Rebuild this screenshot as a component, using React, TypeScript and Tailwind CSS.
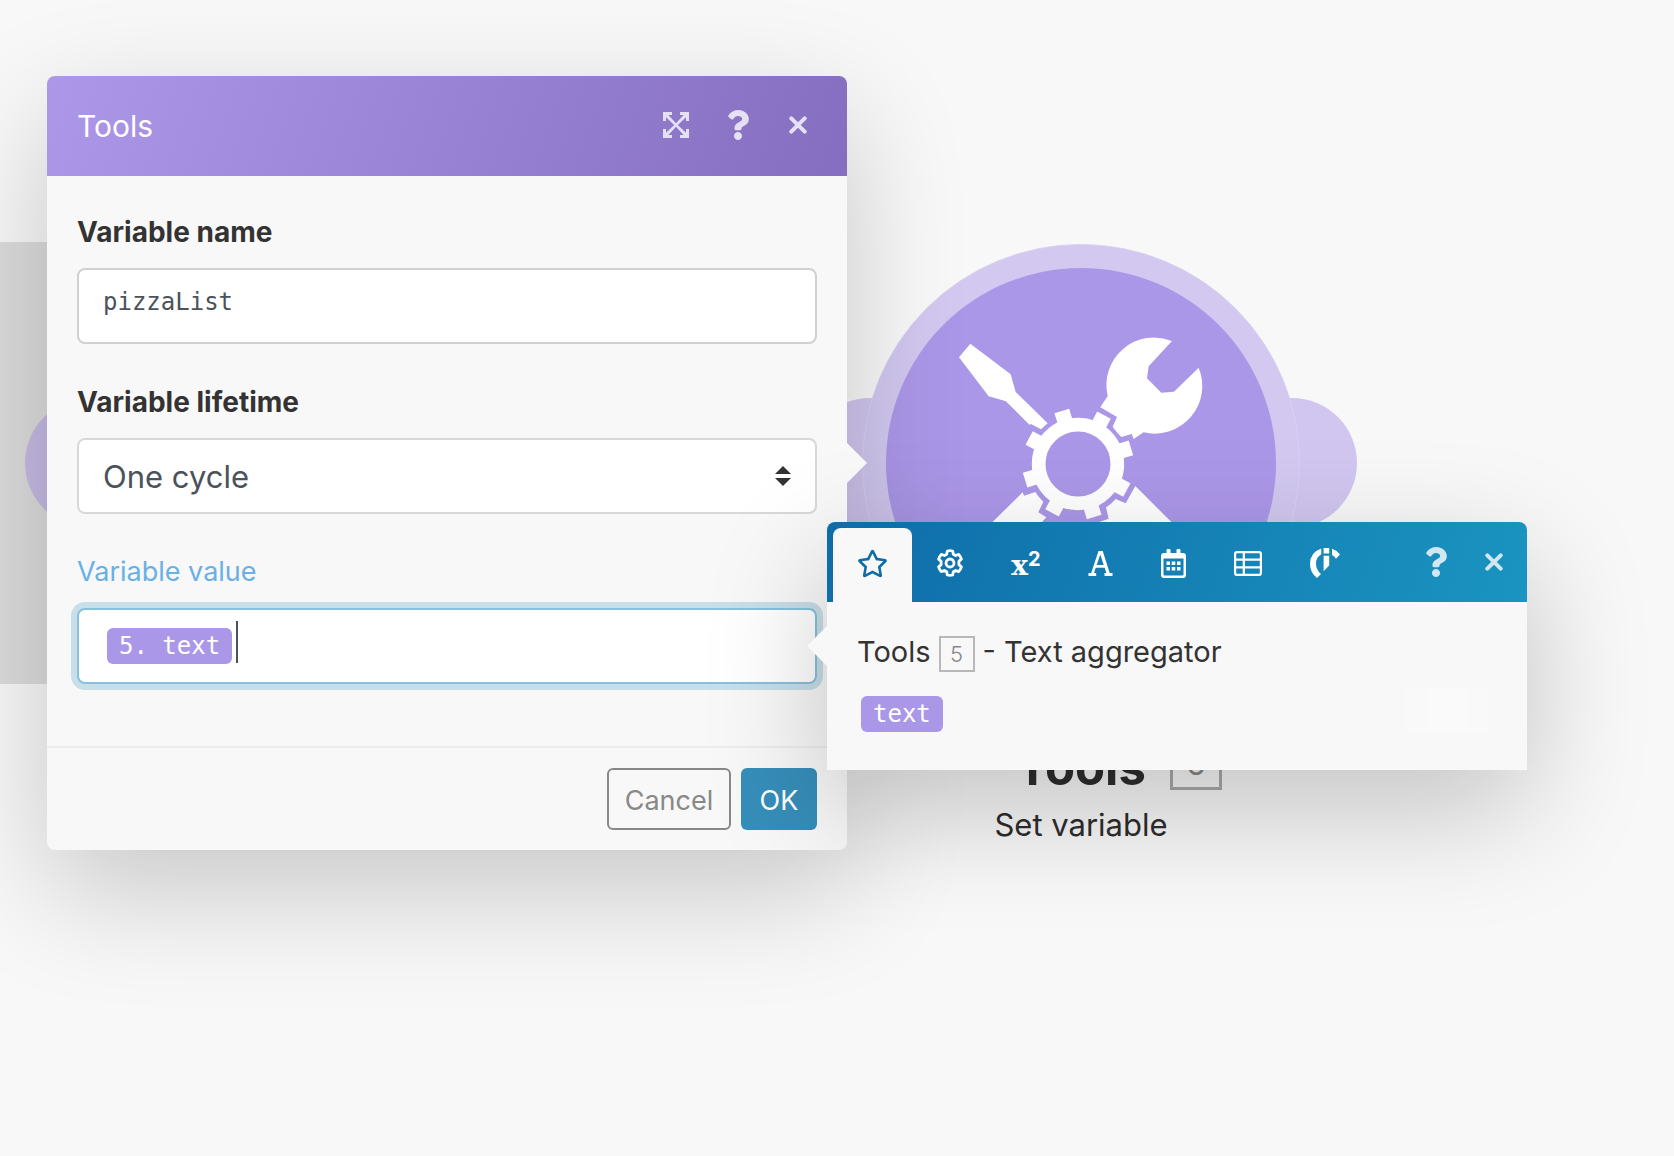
import React from "react";
import { FaQuestion, FaRegStar } from "react-icons/fa";

type IconProps = { className?: string };

function ExpandIcon({ className }: IconProps) {
  return (
    <svg viewBox="0 0 26 26" className={className} fill="currentColor" aria-hidden="true">
      <path d="M0 0h9v3H5.400L13 11.200 20.600 3H17V0h9v9h-3V5.200L14.800 13 23 20.800V17h3v9h-9v-3h3.600L13 14.800 5.400 23H9v3H0v-9h3v3.800L11.200 13 3 5.200V9H0z" />
    </svg>
  );
}

function CrossIcon({ className }: IconProps) {
  return (
    <svg viewBox="0 0 18 18" className={className} fill="none" stroke="currentColor" strokeWidth="4" strokeLinecap="round" aria-hidden="true">
      <path d="M2.300 2.300l13.400 13.400M15.700 2.300L2.300 15.700" />
    </svg>
  );
}

function GearIcon({ className }: IconProps) {
  return (
    <svg viewBox="0 0 28 28" className={className} fill="none" stroke="currentColor" strokeWidth="2.800" strokeLinejoin="round" aria-hidden="true">
      <path d="M11.300 2q2.700-.6 5.400 0l.6 3.200 2.300 1.300 3.100-1.100q1.900 1.900 2.700 4.700l-2.500 2.200v3.400l2.500 2.200q-.8 2.800-2.700 4.700l-3.100-1.100-2.300 1.300-.6 3.200q-2.700.6-5.400 0l-.6-3.200-2.300-1.300-3.100 1.100q-1.900-1.900-2.700-4.700l2.500-2.200v-3.400l-2.500-2.200q.8-2.800 2.700-4.700l3.100 1.100 2.300-1.300z" />
      <circle cx="14" cy="14" r="4" />
    </svg>
  );
}

function CalendarIcon({ className }: IconProps) {
  return (
    <svg viewBox="0 0 25 29" className={className} fill="currentColor" aria-hidden="true">
      <path fillRule="evenodd" d="M5.500 1q0-1 1-1h2q1 0 1 1v3h6V1q0-1 1-1h2q1 0 1 1v3H22q3 0 3 3v19q0 3-3 3H3q-3 0-3-3V7q0-3 3-3h2.500zM2.500 9.500V25.500q0 1 1 1h18q1 0 1-1V9.500z" />
      <path d="M5.500 12.500H9V16H5.500zM10.700 12.500h3.600V16h-3.600zM16 12.500h3.500V16H16zM5.500 18H9v3.500H5.500zM10.700 18h3.600v3.500h-3.600zM16 18h3.500v3.500H16z" />
    </svg>
  );
}

function TableIcon({ className }: IconProps) {
  return (
    <svg viewBox="0 0 28 25" className={className} fill="none" stroke="currentColor" strokeWidth="2.200" aria-hidden="true">
      <rect x="1.100" y="1.100" width="25.800" height="22.800" rx="2" />
      <path d="M1 8.600h26M1 16.400h26M9.800 1v23" />
    </svg>
  );
}

function GaugeIcon({ className }: IconProps) {
  return (
    <svg viewBox="0 0 30 30" className={className} fill="currentColor" aria-hidden="true">
      <path d="M11.300.6v5.600Q6 9.300 6 15.500q0 6.500 5 10.500l-4 4Q0 24.500 0 16 0 4.500 11.300.6z" />
      <path d="M13.600 0h5.600v5.600h-5.600zM13.600 7.800h5.600v9.600l-5.600 5.800z" />
      <path d="M22 .8q4.700 1.400 8 5.700l-4 4.200q-1.600-2.500-4-3.800z" />
    </svg>
  );
}

const teeth = [0, 1, 2, 3, 4, 5, 6, 7];

function ToolsNode() {
  return (
    <svg viewBox="805 244 552 438" className="h-[438px] w-[552px]" aria-hidden="true">
      <circle cx="870" cy="463" r="65" fill="#d1c6ef" />
      <circle cx="1292" cy="463" r="65" fill="#d1c6ef" />
      <circle cx="1081" cy="463" r="218.500" fill="#d2c8f0" stroke="#dad1f3" strokeWidth="1" />
      <circle cx="1081" cy="463" r="195" fill="#ab97e8" />
      <g transform="translate(930 320) scale(0.33333)" fill="#fff">
        <path d="M121 71L242 163 257 216 353 310 333 328 303 312 298 314 228 244 176 229 87 112z" />
        <path d="M726 63A143 143 0 0 0 533 228L511 262 561 291 548 320Q560 338 574 351L605 342 611 357 641 337A143 143 0 0 0 806 143L732 215 694 218 651 175 656 139z" />
        <path d="M278 517L282 527 316 516Q326 532 340 545L325 577 349 592 250 700 92 700z" />
        <path d="M616 498L818 700 560 700 508 606 536 596 528 562Q544 552 557 537L587 550z" />
        <circle cx="444" cy="432" r="118" fill="none" stroke="#fff" strokeWidth="41" />
        {teeth.map((i) => (
          <rect key={i} x="421" y="266" width="46" height="40" transform={`rotate(${i * 45 - 17} 444 432)`} />
        ))}
      </g>
    </svg>
  );
}

function Canvas() {
  return (
    <div className="absolute inset-0 overflow-hidden">
      <div className="absolute left-0 top-[242px] h-[442px] w-[300px] bg-[#dcdcdc]" />
      <div className="absolute left-[25px] top-[398px] size-[130px] rounded-full bg-[#c6bbe4]" />
      <div className="absolute left-[805px] top-[244px] flex w-[552px] flex-col items-center">
        <ToolsNode />
        <h2 className="relative mt-14 text-[49px] font-bold leading-[60px] text-[#2d2d2d]">
          Tools
          <span className="absolute left-full top-0 ml-6 flex size-[52px] items-center justify-center border-3 border-[#aaa] text-[32px] font-normal text-[#888]">
            6
          </span>
        </h2>
        <p className="mt-[5px] text-[31px] leading-[44px] text-[#2d2d2d]">Set variable</p>
      </div>
    </div>
  );
}

function Pill({ children }: { children: React.ReactNode }) {
  return (
    <span className="inline-flex h-9 shrink-0 items-center whitespace-pre rounded-md bg-[#ab97e8] px-3 font-['DejaVu_Sans_Mono',monospace] text-2xl text-white">
      {children}
    </span>
  );
}

function ToolsDialog() {
  return (
    <section
      aria-label="Tools"
      className="relative ml-[47px] w-[800px] rounded-lg bg-[#f8f8f8] shadow-[0_40px_120px_rgba(0,0,0,0.2)]"
    >
      <header className="flex h-[100px] items-center rounded-t-lg bg-[linear-gradient(110deg,#ac97e8,#856ebf)] px-[30px] text-white">
        <h1 className="flex-1 text-[30px]">Tools</h1>
        <div className="flex items-center pb-0.5 pr-2.5 text-[#e6e0f5]">
          <button type="button" aria-label="Expand">
            <ExpandIcon className="size-[26px]" />
          </button>
          <button type="button" aria-label="Help" className="ml-[34px]">
            <FaQuestion className="size-[30px]" />
          </button>
          <button type="button" aria-label="Close" className="ml-9">
            <CrossIcon className="size-[18px]" />
          </button>
        </div>
      </header>

      <form className="flex flex-col gap-[38px] px-[30px] pb-[62px] pt-9">
        <div className="flex flex-col gap-4">
          <label htmlFor="name" className="text-[28px] font-bold leading-10 text-[#333]">
            Variable name
          </label>
          <input
            id="name"
            defaultValue="pizzaList"
            className="h-[76px] w-full rounded-lg border-2 border-[#d0d0d0] bg-white pb-2 pl-6 font-['DejaVu_Sans_Mono',monospace] text-2xl text-[#4a525a] outline-none"
          />
        </div>
        <div className="flex flex-col gap-4">
          <label htmlFor="lifetime" className="text-[28px] font-bold leading-10 text-[#333]">
            Variable lifetime
          </label>
          <div className="relative">
            <select
              id="lifetime"
              className="h-[76px] w-full appearance-none rounded-lg border-2 border-[#d8d8d8] bg-white pl-6 pt-0.5 text-[31px] text-[#4a525a] outline-none"
            >
              <option>One cycle</option>
            </select>
            <svg viewBox="0 0 16 20" className="pointer-events-none absolute right-[26px] top-7 h-5 w-4" fill="#333" aria-hidden="true">
              <path d="M8 0l8 8H0zM8 20l8-8H0z" />
            </svg>
          </div>
        </div>
        <div className="flex flex-col gap-4">
          <label htmlFor="value" className="text-[27px] leading-10 text-[#69b0e6]">
            Variable value
          </label>
          <div className="flex h-[76px] items-center rounded-lg border-2 border-[#87c1dd] bg-white pl-7 ring-6 ring-[#c8dee8]">
            <Pill>5. text</Pill>
            <span className="mb-2 ml-1 h-[42px] w-0.5 bg-[#4a525a]" />
            <input id="value" className="min-w-0 flex-1 bg-transparent outline-none" />
          </div>
        </div>
      </form>

      <footer className="flex justify-end gap-2.5 border-t-2 border-[#ececec] px-[30px] py-5">
        <button type="button" className="h-[62px] w-[124px] rounded-md border-2 border-[#888] pt-1 text-[27px] text-[#888]">
          Cancel
        </button>
        <button type="button" className="h-[62px] w-[76px] rounded-md bg-[#368eba] pt-1 text-[27px] text-white">
          OK
        </button>
      </footer>

      <div className="absolute left-full top-[367px] h-10 w-5 bg-[#f8f8f8] [clip-path:polygon(0_0,100%_50%,0_100%)]" />
    </section>
  );
}

const tabClass = "flex items-center justify-center px-6 pb-1";

function MappingPanel() {
  return (
    <section
      aria-label="Mapping"
      className="absolute left-[827px] top-[522px] w-[700px] rounded-t-lg bg-[#f8f8f8] shadow-[0_40px_120px_rgba(0,0,0,0.22)]"
    >
      <header className="flex h-20 rounded-t-lg bg-[linear-gradient(110deg,#0f6ca9,#1a94c0)] pl-1.5 pt-1.5 text-white">
        <nav className="flex flex-1">
          <button type="button" aria-label="Favorites" className="flex items-center justify-center rounded-t-lg bg-[#f8f8f8] px-6 pb-1 text-[#0f6ca9]">
            <FaRegStar className="size-[31px]" />
          </button>
          <button type="button" aria-label="General" className={tabClass}>
            <GearIcon className="size-7" />
          </button>
          <button
            type="button"
            aria-label="Math"
            className="flex w-[76px] items-center justify-center pt-0.5 font-['DejaVu_Serif',serif] text-[28px] font-bold leading-none"
          >
            x<span className="mb-3.5 font-[Inter,sans-serif] text-xl leading-none">2</span>
          </button>
          <button type="button" aria-label="Text" className={tabClass}>
            <svg viewBox="0 0 25 25" className="w-[25px]" fill="currentColor" aria-hidden="true">
              <path fillRule="evenodd" d="M10.500 0h4.200l7 22H24.500v3h-8v-3h1.900l-1.700-5.200H7.700L6 22h2.200v3H.5v-3h2.700zM12.300 3.600L8.700 14h7z" />
            </svg>
          </button>
          <button type="button" aria-label="Date" className={tabClass}>
            <CalendarIcon className="w-[25px]" />
          </button>
          <button type="button" aria-label="Array" className={tabClass}>
            <TableIcon className="w-7" />
          </button>
          <button type="button" aria-label="Variables" className={tabClass}>
            <GaugeIcon className="w-[30px]" />
          </button>
        </nav>
        <div className="flex items-center gap-[34px] pb-1.5 pr-6 text-[#d1e7f1]">
          <button type="button" aria-label="Help">
            <FaQuestion className="size-[30px]" />
          </button>
          <button type="button" aria-label="Close">
            <CrossIcon className="size-[18px]" />
          </button>
        </div>
      </header>
      <div className="px-[30px] pb-[38px] pt-7">
        <h2 className="flex items-center text-[29px] leading-[44px] text-[#333]">
          Tools
          <span className="mx-2 mt-1 flex size-9 items-center justify-center border-2 border-[#b8b8b8] text-[22px] font-light text-[#888]">
            5
          </span>
          - Text aggregator
        </h2>
        <div className="mt-[14px] flex justify-between pl-1 pr-2">
          <div className="pt-2">
            <Pill>text</Pill>
          </div>
          <div className="flex h-11 w-[84px] justify-center bg-[#f9f9f9]">
            <div className="w-10 bg-[#fafafa]" />
          </div>
        </div>
      </div>
      <div className="absolute right-full top-[104px] h-10 w-5 bg-[#f8f8f8] [clip-path:polygon(100%_0,0_50%,100%_100%)]" />
    </section>
  );
}

export default function App() {
  return (
    <main className="relative min-h-screen overflow-hidden bg-[#f8f8f8] pt-[76px] font-[Inter,sans-serif]">
      <Canvas />
      <ToolsDialog />
      <MappingPanel />
    </main>
  );
}
